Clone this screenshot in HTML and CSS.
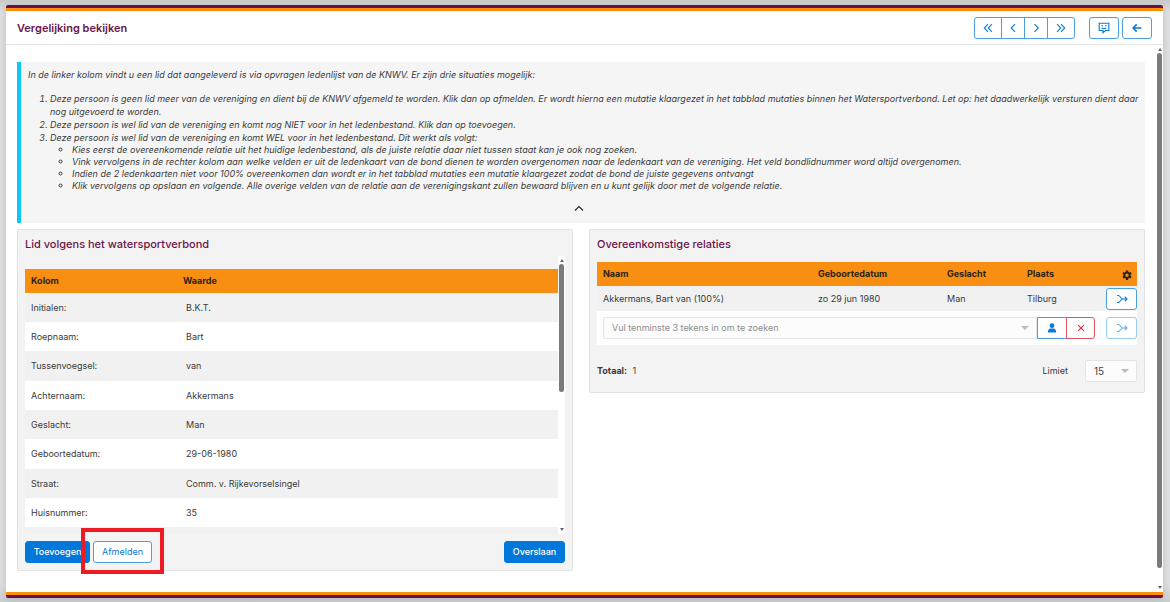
FILE: index.html
```html
<!DOCTYPE html>
<html lang="nl">
<head>
<meta charset="utf-8">
<title>Vergelijking bekijken</title>
<link rel="stylesheet" href="styles.css">
</head>
<body>
<svg class="defs" aria-hidden="true">
  <symbol id="merge" viewBox="0 0 12 10"><path d="M1 1.500h1.200C4.500 1.500 4.500 5 7 5h4M1 8.500h1.200C4.500 8.500 4.500 5 7 5M8.800 2.700 11 5 8.800 7.300" fill="none" stroke="currentColor" stroke-width="1.100"/></symbol>
</svg>
<div class="window">
  <header class="bar">
    <h1 class="bar-title">Vergelijking bekijken</h1>
    <nav class="tools" aria-label="Navigatie">
      <div class="group">
        <button class="btn tool first" aria-label="Eerste"><svg width="10" height="10" viewBox="0 0 10 10"><path d="M5 1.200 1.300 5 5 8.800M8.900 1.200 5.200 5l3.700 3.800"/></svg></button>
        <button class="btn tool" aria-label="Vorige"><svg width="10" height="10" viewBox="0 0 10 10"><path d="M7 1.200 3.200 5 7 8.800"/></svg></button>
        <button class="btn tool" aria-label="Volgende"><svg width="10" height="10" viewBox="0 0 10 10"><path d="M3.500 1.200 7.300 5 3.500 8.800"/></svg></button>
        <button class="btn tool last" aria-label="Laatste"><svg width="10" height="10" viewBox="0 0 10 10"><path d="M1.100 1.200 4.800 5 1.100 8.800M5 1.200 8.700 5 5 8.800"/></svg></button>
      </div>
      <div class="pair">
        <button class="btn wide" aria-label="Feedback"><svg width="12" height="12" viewBox="0 0 12 12"><path d="M1.200 1.200h9.600v7.300H7.500L5 10.700V8.500H1.200zM4.200 3v1.400M7.800 3v1.400M3.700 5.800c1.200 1.300 3.400 1.300 4.600 0"/></svg></button>
        <button class="btn wide" aria-label="Terug"><svg width="10" height="10" viewBox="0 0 10 10"><path d="M9.500 5H1.200M4.700 1.400 1.100 5l3.600 3.600" stroke-width="1.500"/></svg></button>
      </div>
    </nav>
  </header>
  <div class="body">
    <main class="content">
      <section class="info">
        <p>In de linker kolom vindt u een lid dat aangeleverd is via opvragen ledenlijst van de KNWV. Er zijn drie situaties mogelijk:</p>
        <ol>
          <li>Deze persoon is geen lid meer van de vereniging en dient bij de KNWV afgemeld te worden. Klik dan op afmelden. Er wordt hierna een mutatie klaargezet in het tabblad mutaties binnen het Watersportverbond. Let op: het daadwerkelijk versturen dient daar nog uitgevoerd te worden.</li>
          <li>Deze persoon is wel lid van de vereniging en komt nog NIET voor in het ledenbestand. Klik dan op toevoegen.</li>
          <li>Deze persoon is wel lid van de vereniging en komt WEL voor in het ledenbestand. Dit werkt als volgt:
            <ul>
              <li>Kies eerst de overeenkomende relatie uit het huidige ledenbestand, als de juiste relatie daar niet tussen staat kan je ook nog zoeken.</li>
              <li>Vink vervolgens in de rechter kolom aan welke velden er uit de ledenkaart van de bond dienen te worden overgenomen naar de ledenkaart van de vereniging. Het veld bondlidnummer word altijd overgenomen.</li>
              <li>Indien de 2 ledenkaarten niet voor 100% overeenkomen dan wordt er in het tabblad mutaties een mutatie klaargezet zodat de bond de juiste gegevens ontvangt</li>
              <li>Klik vervolgens op opslaan en volgende. Alle overige velden van de relatie aan de verenigingskant zullen bewaard blijven en u kunt gelijk door met de volgende relatie.</li>
            </ul>
          </li>
        </ol>
        <button class="collapse" aria-label="Inklappen"><svg width="10" height="7" viewBox="0 0 10 7"><path d="M1 5.500 5 1.500l4 4"/></svg></button>
      </section>
      <div class="columns">
        <section class="panel">
          <h2>Lid volgens het watersportverbond</h2>
          <div class="scroller">
            <div class="clip">
              <table class="fields">
                <thead><tr><th class="key">Kolom</th><th>Waarde</th></tr></thead>
                <tbody>
                  <tr><td>Initialen:</td><td class="val">B.K.T.</td></tr>
                  <tr><td>Roepnaam:</td><td class="val">Bart</td></tr>
                  <tr><td>Tussenvoegsel:</td><td class="val">van</td></tr>
                  <tr><td>Achternaam:</td><td class="val">Akkermans</td></tr>
                  <tr><td>Geslacht:</td><td class="val">Man</td></tr>
                  <tr><td>Geboortedatum:</td><td class="val">29-06-1980</td></tr>
                  <tr><td>Straat:</td><td class="val">Comm. v. Rijkevorselsingel</td></tr>
                  <tr><td>Huisnummer:</td><td class="val">35</td></tr>
                  <tr><td></td><td></td></tr>
                </tbody>
              </table>
            </div>
            <div class="track"><i class="up"></i><i class="thumb half"></i><i class="down"></i></div>
          </div>
          <footer class="actions">
            <button class="btn solid add">Toevoegen</button>
            <span class="marked"><button class="btn remove">Afmelden</button></span>
            <button class="btn solid skip">Overslaan</button>
          </footer>
        </section>
        <section class="panel">
          <h2>Overeenkomstige relaties</h2>
          <table class="relations">
            <thead><tr><th class="c-name">Naam</th><th class="c-date">Geboortedatum</th><th class="c-sex">Geslacht</th><th class="c-city">Plaats</th><th class="c-act"><button class="gear" aria-label="Instellingen"><svg width="10" height="10" viewBox="0 0 20 20"><path fill-rule="evenodd" d="M8 1h4l.6 2.700 1.900 1.100 2.600-.8 2 3.400-2 1.900v2.200l2 1.900-2 3.400-2.600-.8-1.900 1.100L12 19.800H8l-.6-2.700L5.500 16l-2.600.8-2-3.400 2-1.900V9.300l-2-1.900 2-3.400 2.600.8 1.900-1.100zM10 7a3.400 3.400 0 1 0 0 6.800A3.400 3.400 0 0 0 10 7z" fill="currentColor" stroke="none"/></svg></button></th></tr></thead>
            <tbody>
              <tr><td>Akkermans, Bart van (100%)</td><td>zo 29 jun 1980</td><td>Man</td><td>Tilburg</td><td class="c-act"><button class="btn wide" aria-label="Koppelen"><svg width="12" height="10"><use href="#merge"/></svg></button></td></tr>
              <tr class="search-row"><td colspan="4" class="search-cell">
                <div class="search">
                  <div class="pick grow"><select aria-label="Relatie zoeken"><option>Vul tenminste 3 tekens in om te zoeken</option></select></div>
                  <button class="btn person" aria-label="Persoon"><svg width="10" height="10" viewBox="0 0 10 10"><circle class="fill" cx="5" cy="2.700" r="2.400"/><path class="fill" d="M.8 9.500C.8 6.500 2.300 5.400 3.500 5.400h3c1.200 0 2.700 1.100 2.700 4.100z"/></svg></button>
                  <button class="btn clear" aria-label="Wissen"><svg width="8" height="8" viewBox="0 0 8 8"><path d="m1.200 1.200 5.600 5.600m0-5.600L1.200 6.800"/></svg></button>
                </div></td><td class="c-act"><button class="btn wide" disabled aria-label="Koppelen"><svg width="12" height="10"><use href="#merge"/></svg></button></td></tr>
            </tbody>
          </table>
          <div class="summary">
            <span><b>Totaal:</b> 1</span>
            <label class="limit" for="limit">Limiet</label>
            <div class="pick small"><select id="limit"><option>15</option></select></div>
          </div>
        </section>
      </div>
    </main>
    <div class="track page"><i class="up"></i><i class="thumb"></i><i class="down"></i></div>
  </div>
</div>
</body>
</html>
```
FILE: styles.css
```css
* { box-sizing: border-box; }
body {
  margin: 0;
  height: 100vh;
  padding: 5px 7px 4px 6px;
  background: linear-gradient(#c8caca, #dddee0 12px, #dddee0 585px, #cbcdcd);
  font: 9px/12px Inter, "Liberation Sans", sans-serif;
  color: #3a3a3a;
}
h1, h2, p, ol, ul { margin: 0; font-weight: 500; }
button, select { font: inherit; color: inherit; margin: 0; padding: 0; }
svg { display: block; fill: none; stroke: currentColor; stroke-width: 1.1; }
.fill { fill: currentColor; stroke: none; }
.defs { position: absolute; width: 0; height: 0; }

.window {
  height: 100%;
  display: flex;
  flex-direction: column;
  background: #fff;
  border-top: 3px solid #6b0f4b;
  border-bottom: 3px solid #6b0f4b;
  border-radius: 2px;
  box-shadow: 0 1px 6px rgba(0, 0, 0, .14);
}
.bar {
  display: flex;
  align-items: center;
  justify-content: space-between;
  height: 37px;
  flex: none;
  border-top: 3px solid #fb8f0c;
  border-bottom: 1px solid #e6e6e8;
  padding: 0 11px;
}
.bar-title { font-size: 11px; font-weight: 600; color: #6b1449; }
.tools { display: flex; gap: 14px; }
.group { display: flex; }
.pair { display: flex; gap: 3px; }

.btn {
  display: inline-flex;
  align-items: center;
  justify-content: center;
  height: 22px;
  background: #fff;
  border: 1px solid #4a9fe3;
  border-radius: 3px;
  color: #0a79d8;
}
.tool { width: 24px; margin-left: -1px; border-radius: 0; }
.tool.first { width: 28px; margin-left: 0; border-radius: 3px 0 0 3px; }
.tool.last { width: 28px; border-radius: 0 3px 3px 0; }
.wide { width: 31px; }
.pair .wide { width: 30px; }
.btn:disabled { border-color: #9bcbf0; color: #62aee9; }
.solid { background: #0078db; border-color: #0078db; color: #fff; font-weight: 500; }

.body { display: flex; flex: 1; min-height: 0; border-bottom: 3px solid #fb8f0c; }
.content { flex: 1; min-width: 0; padding: 17px 11px 0; }

.info {
  border-left: 4px solid #0bc9f2;
  background: #f5f5f5;
  padding: 7px 4px 11px 7px;
  font-style: italic;
  font-feature-settings: "cv11";
  display: flex;
  flex-direction: column;
}
.info p { margin-bottom: 11px; font-weight: 400; }
.info ol, .info ul { padding-left: 22px; font-weight: 400; }
.info ol { line-height: 13px; }
.info ul { line-height: 12px; list-style: circle; }
.collapse { align-self: center; border: 0; background: none; color: #222; margin: 13px 11px 0 0; }

.columns { display: grid; grid-template-columns: 1fr 1fr; gap: 16px; align-items: start; margin-top: 6px; }
.panel { background: #f3f3f3; border: 1px solid #e2e2e2; border-radius: 2px; padding: 6px 7px 7px; }
.panel h2 { font-size: 11px; line-height: 16px; color: #6b1449; }

table { width: 100%; border-collapse: collapse; table-layout: fixed; }
th, td { text-align: left; padding: 0 6px; font-weight: 400; }
th { height: 24px; background: #f98f12; font-weight: 700; color: #2c2318; }

.scroller { display: flex; height: 278px; margin-top: 4px; }
.clip { flex: 1; overflow: hidden; padding-top: 13px; }
.fields td { height: 29px; background: #fff; }
.fields tr:nth-child(3n) td { height: 30px; }
.fields tr:nth-child(odd) td { background: #f1f1f1; }
.fields .key { width: 152px; }
.fields .val { padding-left: 9px; }

.track { width: 7px; background: #fff; display: flex; flex-direction: column; align-items: center; padding: 3px 0; }
.up, .down { border: 2px solid transparent; flex: none; }
.up { border-top: 0; border-bottom: 3px solid #666; }
.down { border-bottom: 0; border-top: 3px solid #666; margin-top: auto; }
.thumb { width: 5px; flex: 1; background: #7b7b7b; border-radius: 3px; margin: 2px 0 18px; }
.thumb.half { flex: none; height: 128px; margin: 2px 0 0; }

.actions { display: flex; gap: 3px; margin-top: 7px; }
.add { width: 65px; }
.remove { width: 59px; }
.skip { width: 61px; margin-left: auto; }
.marked { position: relative; display: flex; }
.marked::after { content: ""; position: absolute; inset: -13px -12px -11px; border: 4px solid #ed1c24; pointer-events: none; }

.relations { margin-top: 10px; }
.relations td { height: 25px; background: #f1f1f1; }
.relations .search-row td { height: 34px; background: #fff; }
.relations .search-cell { padding-right: 3px; }
.c-date { width: 129px; }
.c-sex { width: 80px; }
.c-city { width: 77px; }
.relations .c-act { width: 39px; padding: 0 0 0 3px; text-align: right; }
.c-act .btn { vertical-align: middle; }
.gear { border: 0; background: none; margin-right: 5px; vertical-align: middle; color: #2c2318; }
.search { display: flex; }
.grow { flex: 1; }
.pick { position: relative; }
.pick select {
  display: block;
  appearance: none;
  width: 100%;
  height: 22px;
  padding: 0 8px;
  border: 1px solid #e4e4e4;
  border-radius: 2px;
  background: #fcfcfc;
  color: #8c8c8c;
}
.pick::after { content: ""; position: absolute; right: 8px; top: 9px; border: 4px solid transparent; border-top-color: #bbb; border-bottom: 0; }
.person { width: 30px; border-radius: 0; }
.clear { width: 29px; margin-left: -1px; border-color: #e2555f; color: #dc2f3c; border-radius: 0 3px 3px 0; }
.summary { display: flex; align-items: center; margin-top: 15px; padding-bottom: 3px; }
.summary b { margin-right: 3px; }
.limit { margin-left: auto; margin-right: 17px; }
.small { width: 52px; }
.pick.small select { font-size: 10px; color: #444; }
```
